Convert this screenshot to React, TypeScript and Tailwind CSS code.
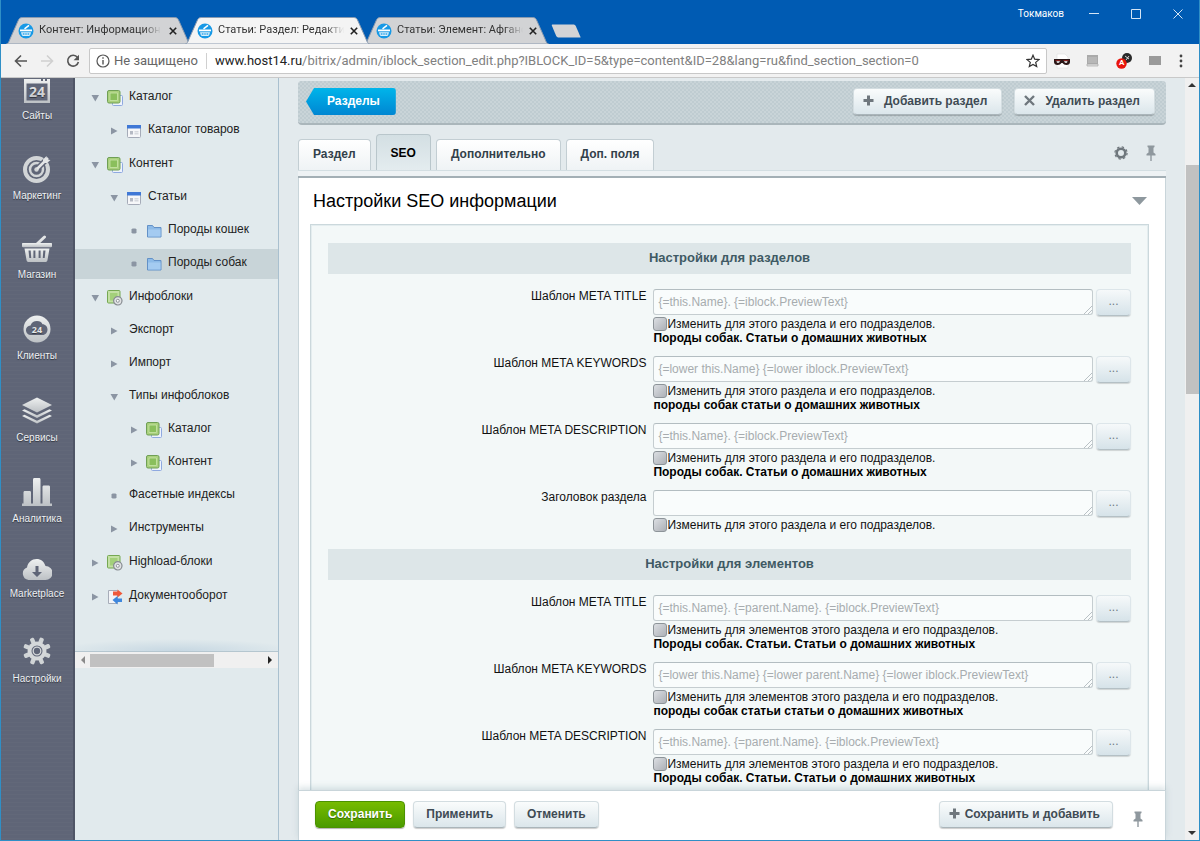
import React from 'react';

type IconProps = { className?: string };

/* ---------- browser chrome ---------- */

function SiteIcon() {
  return (
    <svg className="size-4 shrink-0" viewBox="0 0 16 16" aria-hidden="true">
      <circle cx="8" cy="8" r="7.500" fill="#1799e6" />
      <path d="M2 6.500h12v1.800H2z" fill="#fff" />
      <path d="M3 9.200h10l-.8 2.800c-.2.700-.7 1-1.500 1H5.300c-.8 0-1.300-.3-1.500-1z" fill="#d9effb" />
      <path d="M6.500 5.800L11 2.300" stroke="#fff" strokeWidth="1.500" />
      <path d="M5.300 10v2M7.100 10v2M8.900 10v2M10.700 10v2" stroke="#1799e6" strokeWidth=".8" />
    </svg>
  );
}

function BrowserTab({ title, active = false }: { title: string; active?: boolean }) {
  return (
    <div className={active ? 'relative z-10 -mr-1.5 h-[27px] w-[185px]' : 'relative -mr-1.5 h-[27px] w-[185px]'}>
      <svg className="absolute inset-0 size-full" viewBox="0 0 185 27" preserveAspectRatio="none" aria-hidden="true">
        <path
          d="M0.500 27C2 26.500 3 25 4 22L12 4C13 1.500 14 .5 16.500 .5H168.500C171 .5 172 1.500 173 4L181 22C182 25 183 26.500 184.500 27z"
          fill={active ? '#f4f4f4' : '#d2d3d5'}
          stroke="#8a9bb0"
          strokeWidth="1"
        />
      </svg>
      <div className="relative flex h-full items-center pr-3 pl-3">
        <SiteIcon />
        <a
          href="#"
          className="ml-[5px] w-[126px] [mask-image:linear-gradient(to_right,#000_85%,transparent)] text-[11px] whitespace-nowrap text-[#333]"
        >
          {title}
        </a>
        <button type="button" aria-label="Закрыть вкладку" className="ml-1.5 flex size-3 items-center justify-center">
          <svg className="size-2" viewBox="0 0 8 8" aria-hidden="true">
            <path d="M.8.8l6.400 6.400M7.200.8L.8 7.200" stroke="#222" strokeWidth="1.600" />
          </svg>
        </button>
      </div>
    </div>
  );
}

function TitleBar() {
  return (
    <header className="flex h-[44px] shrink-0 items-end justify-between bg-[#005bb3]">
      <div className="flex items-end pl-[5px]">
        <BrowserTab title="Контент: Информацион" />
        <BrowserTab title="Статьи: Раздел: Редактир" active />
        <BrowserTab title="Статьи: Элемент: Афганс" />
        <button type="button" aria-label="Новая вкладка" className="mb-1.5 ml-2">
          <svg className="h-[14px] w-[30px]" viewBox="0 0 30 14" aria-hidden="true">
            <path d="M2 .5h20c1.500 0 2.300.5 3 2L29.500 13c.2.500 0 .5-.5.5H8c-1.500 0-2.300-.5-3-2L.800 1.500C.6.800 1 .5 2 .5z" fill="#d3d4d6" />
          </svg>
        </button>
      </div>
      <div className="flex self-start pt-1.5 pr-4">
        <span className="mr-[25px] text-[10px] leading-4 text-white">Токмаков</span>
        <div className="flex gap-8 pt-[3px]">
          <button type="button" aria-label="Свернуть" className="self-start">
            <svg className="size-2.5" viewBox="0 0 10 10" aria-hidden="true"><path d="M0 4.500h10" stroke="#d5e5f5" /></svg>
          </button>
          <button type="button" aria-label="Развернуть" className="self-start">
            <svg className="size-2.5" viewBox="0 0 10 10" aria-hidden="true"><path d="M.5.5h9v9h-9z" fill="none" stroke="#d5e5f5" /></svg>
          </button>
          <button type="button" aria-label="Закрыть" className="self-start">
            <svg className="size-2.5" viewBox="0 0 10 10" aria-hidden="true"><path d="M.5.5l9 9M9.500.5l-9 9" stroke="#d5e5f5" /></svg>
          </button>
        </div>
      </div>
    </header>
  );
}

function AddressBar() {
  return (
    <div className="flex h-[34px] shrink-0 items-center border-b border-[#c9c9c9] bg-[#f2f2f2] pr-3 pl-[13px]">
      <div className="flex gap-3">
        <button type="button" aria-label="Назад">
          <svg className="size-3.5" viewBox="0 0 14 14" fill="none" stroke="#555" strokeWidth="1.600" aria-hidden="true"><path d="M13 7H1.500M7 1.500L1.500 7 7 12.500" /></svg>
        </button>
        <button type="button" aria-label="Вперёд">
          <svg className="size-3.5" viewBox="0 0 14 14" fill="none" stroke="#d0d0d0" strokeWidth="1.600" aria-hidden="true"><path d="M1 7h11.500M7 1.500L12.500 7 7 12.500" /></svg>
        </button>
        <button type="button" aria-label="Обновить">
          <svg className="size-3.5" viewBox="0 0 14 14" aria-hidden="true">
            <path d="M11.500 3.500A5.400 5.400 0 1 0 12.400 8" fill="none" stroke="#555" strokeWidth="1.600" />
            <path d="M13 .8v5.400H7.600z" fill="#555" />
          </svg>
        </button>
      </div>
      <div className="ml-[9px] flex h-[26px] min-w-0 flex-1 items-center rounded-xs border border-[#c8c8c8] bg-white px-1.5">
        <svg className="size-3.5 shrink-0" viewBox="0 0 14 14" aria-hidden="true">
          <circle cx="7" cy="7" r="6" fill="none" stroke="#555" strokeWidth="1.200" />
          <path d="M7 6v4.500M7 3.300v1.500" stroke="#555" strokeWidth="1.400" />
        </svg>
        <span className="ml-1 text-[13px] text-[#666]">Не защищено</span>
        <span className="mx-2 h-4 w-px bg-[#d0d0d0]" />
        <span className="min-w-0 flex-1 text-[13px] whitespace-nowrap text-[#808080]">
          <span className="text-[#222]">www.host14.ru</span>
          /bitrix/admin/iblock_section_edit.php?IBLOCK_ID=5&amp;type=content&amp;ID=28&amp;lang=ru&amp;find_section_section=0
        </span>
        <button type="button" aria-label="Добавить в закладки">
          <svg className="size-3.5" viewBox="0 0 14 14" aria-hidden="true">
            <path d="M7 1.200l1.700 4 4.300.4-3.300 2.800 1 4.200L7 10.400l-3.700 2.200 1-4.200L1 5.600l4.300-.4z" fill="none" stroke="#333" strokeWidth="1.200" />
          </svg>
        </button>
      </div>
      <div className="flex items-center gap-4 pl-[7px]">
        <svg className="size-4" viewBox="0 0 16 16" aria-hidden="true">
          <path d="M3 1h8l3 3v11H3z" fill="#fff" stroke="#ddd" strokeWidth=".6" />
          <path d="M0 6h16v3c0 2-1.500 3-3.500 3-2 0-3-1-4-2H7.500c-1 1-2 2-4 2S0 11 0 9z" fill="#2b1717" />
          <path d="M2.500 8.200h3.500l-1 1.500H3zM10 8.200h3.500l-.5 1.500h-2z" fill="#fff" />
          <path d="M1.500 7.500h5M9.500 7.500h5" stroke="#a22" strokeWidth=".7" />
        </svg>
        <svg className="size-3.5" viewBox="0 0 14 14" aria-hidden="true">
          <path d="M1 1h11v9H1z" fill="#aaa" />
          <path d="M2 4h9M2 6h9M2 8h9" stroke="#ccc" strokeWidth=".8" />
          <path d="M1 10h11v2H1z" fill="#ddd" stroke="#aaa" strokeWidth=".7" />
        </svg>
        <span className="relative h-4 w-[17px]">
          <svg className="size-full" viewBox="0 0 17 16" aria-hidden="true">
            <circle cx="11" cy="5" r="5" fill="#2a2a2a" />
            <path d="M9 3l4 3M10 7l3-4" stroke="#fff" strokeWidth=".8" />
            <circle cx="5.500" cy="10.500" r="5.200" fill="#e9150c" />
          </svg>
          <span className="absolute bottom-0.5 left-[3px] text-[8px] leading-[8px] font-bold text-white">A</span>
        </span>
        <svg className="h-2.5 w-3" viewBox="0 0 12 10" aria-hidden="true">
          <path d="M0 0h12v9H0z" fill="#9a9a9a" />
        </svg>
        <button type="button" aria-label="Меню" className="pr-1 pl-0.5">
          <svg className="h-3.5 w-1" viewBox="0 0 4 14" fill="#444" aria-hidden="true">
            <circle cx="2" cy="2" r="1.400" /><circle cx="2" cy="7" r="1.400" /><circle cx="2" cy="12" r="1.400" />
          </svg>
        </button>
      </div>
    </div>
  );
}

/* ---------- dark navigation rail ---------- */

const METAL = 'url(#metal)';

function MetalGradient() {
  return (
    <svg className="absolute size-0" aria-hidden="true">
      <defs>
        <linearGradient id="metal" x1="0" y1="0" x2="0" y2="1">
          <stop offset="0" stopColor="#eef0f0" />
          <stop offset="1" stopColor="#bdc1c5" />
        </linearGradient>
      </defs>
    </svg>
  );
}

const railItems: { label: string; icon: React.ReactNode }[] = [
  {
    label: 'Сайты',
    icon: (
      <svg className="h-6 w-7" viewBox="0 0 28 24" aria-hidden="true">
        <path fillRule="evenodd" d="M1 0h17v2h2V0h2v2h2V0h3v24H1zM3.500 4.500v17h21v-17z" fill={METAL} />
        <text x="14" y="18" textAnchor="middle" fontSize="14" fontWeight="700" fill={METAL} fontFamily="Open Sans, sans-serif">24</text>
      </svg>
    ),
  },
  {
    label: 'Маркетинг',
    icon: (
      <svg className="h-7 w-7" viewBox="0 0 28 28" aria-hidden="true">
        <circle cx="13.500" cy="14.500" r="11.500" fill="none" stroke="#d2d5d7" strokeWidth="4" />
        <circle cx="13.500" cy="14.500" r="6.500" fill="none" stroke="#d2d5d7" strokeWidth="2.500" />
        <circle cx="13.500" cy="14.500" r="2.200" fill="#d2d5d7" />
        <path d="M15 13L26 2" stroke="#5f6577" strokeWidth="5.500" />
        <path d="M14 14L25 3" stroke="#e3e5e6" strokeWidth="2.500" />
        <path d="M20 8V4.500L23.500 1l.5 3.500 3.500.5L24 8z" fill="#e3e5e6" />
      </svg>
    ),
  },
  {
    label: 'Магазин',
    icon: (
      <svg className="h-[27px] w-[30px]" viewBox="0 0 30 27" aria-hidden="true">
        <path d="M15 9L22.500 2" stroke="#e3e5e6" strokeWidth="3" strokeLinecap="round" />
        <path d="M1 8h28c.8 0 1 .5 1 1v2c0 .8-.4 1.200-1 1.200H1c-.6 0-1-.4-1-1.200V9c0-.5.2-1 1-1z" fill={METAL} />
        <path fillRule="evenodd" d="M2.500 13.500h25L25.500 25c-.3 1.500-1 2-2.300 2H6.800C5.500 27 4.800 26.500 4.500 25zM6.500 15.500l.8 7.500h1.900l-.5-7.500zm4.900 0v7.500h2v-7.500zm5.200 0v7.500h2v-7.500zM21.300 15.500l-.5 7.500h1.900l.8-7.500z" fill={METAL} />
      </svg>
    ),
  },
  {
    label: 'Клиенты',
    icon: (
      <svg className="h-[29px] w-7" viewBox="0 0 28 29" aria-hidden="true">
        <circle cx="14" cy="15" r="13.500" fill={METAL} />
        <path d="M8 21a4.800 4.800 0 0 1-.5-9.600C8.500 8.500 11 7 14 7c2.800 0 4.500 1.200 5.500 3.200 2.800 0 5 2.300 5 5.300S22.500 21 19.500 21z" fill="#5f6577" />
        <text x="14" y="18.500" textAnchor="middle" fontSize="9" fontWeight="700" fill="#e3e5e6" fontFamily="Open Sans, sans-serif">24</text>
      </svg>
    ),
  },
  {
    label: 'Сервисы',
    icon: (
      <svg className="h-[30px] w-[30px]" viewBox="0 0 30 30" fill={METAL} aria-hidden="true">
        <path d="M15 2.500l15 7.500-15 7.500L0 10z" />
        <path d="M0 15.500l2.500-1.300 12.500 6 12.500-6 2.500 1.300-15 7.500z" />
        <path d="M0 21l2.500-1.300 12.500 6 12.500-6L30 21l-15 7.500z" />
      </svg>
    ),
  },
  {
    label: 'Аналитика',
    icon: (
      <svg className="h-[29px] w-[30px]" viewBox="0 0 30 29" fill={METAL} aria-hidden="true">
        <path d="M0 29v-2.500h1.500V15.500c0-1 .5-1.500 1.500-1.500h4.500c1 0 1.500.5 1.500 1.500v11h2V3c0-1.500.5-2 1.500-2H17c1 0 1.500.5 1.500 2v23.500h2V10c0-1 .5-1.500 1.500-1.500h4.500c1 0 1.500.5 1.500 1.500v16.500H30V29z" />
      </svg>
    ),
  },
  {
    label: 'Marketplace',
    icon: (
      <svg className="h-[23px] w-[30px]" viewBox="0 0 30 23" aria-hidden="true">
        <path d="M6.500 22a6.500 6.500 0 0 1-1.500-12.500C6 4 10 1 14.500 1 19 1 22 3.500 23.500 8a7 7 0 0 1 0 14z" fill={METAL} />
        <path d="M13.500 8h3v6h3.500l-5 5-5-5h3.500z" fill="#5f6577" />
      </svg>
    ),
  },
  {
    label: 'Настройки',
    icon: (
      <svg className="h-[33px] w-7" viewBox="0 0 28 33" aria-hidden="true">
        <g transform="translate(14 18)">
          {[22, 67, 112, 157].map((a) => (
            <rect key={a} x="-2.200" y="-14" width="4.400" height="28" rx="1.500" fill="#d0d4d6" transform={`rotate(${a})`} />
          ))}
          <circle r="9.500" fill="#d5d8da" />
          <circle r="5.500" fill="#5f6577" />
          <circle r="3.800" fill="none" stroke="#d5d8da" strokeWidth="1.300" />
        </g>
      </svg>
    ),
  },
];

function Rail() {
  return (
    <nav className="w-[74px] shrink-0 overflow-hidden border-r-2 border-[#4f5566] bg-[#5f6577] bg-[repeating-linear-gradient(to_bottom,#626879_0_1px,#5f6577_1px_4px)] pt-px">
      <MetalGradient />
      <ul className="flex flex-col gap-8">
        {railItems.map((item) => (
          <li key={item.label}>
            <a href="#" className="flex flex-col items-center gap-1.5 text-[10px] leading-[14px] whitespace-nowrap text-[#eef1f4] [text-shadow:0_1px_1px_rgba(0,0,0,.5)]">
              {item.icon}
              {item.label}
            </a>
          </li>
        ))}
      </ul>
    </nav>
  );
}

/* ---------- tree menu ---------- */

function TypeIcon() {
  return (
    <svg className="size-4" viewBox="0 0 16 16" aria-hidden="true">
      <rect x="5.500" y="5.500" width="10" height="10" rx="1" fill="#eef3fd" stroke="#8fa9e0" />
      <rect x=".5" y=".5" width="12.500" height="12.500" rx="1.500" fill="#a9d07c" stroke="#6f9f55" />
      <path d="M3 3h7.500v7.500H3z" fill="#8abf5c" stroke="#c9e6a9" strokeWidth=".8" />
    </svg>
  );
}
function ListIcon() {
  return (
    <svg className="size-4" viewBox="0 0 16 16" aria-hidden="true">
      <rect x="1.500" y="2.500" width="13" height="12" rx="1" fill="#f6f7f9" stroke="#a5abb8" />
      <path d="M1 2h14v3.500H1z" fill="#3f78d6" />
      <path d="M4 8h3v3.500H4zM8.500 8.500h4v.8h-4zM8.500 10.500h4v.8h-4z" fill="#b5bac4" />
    </svg>
  );
}
function FolderIcon() {
  return (
    <svg className="size-4" viewBox="0 0 16 16" aria-hidden="true">
      <path d="M1.500 2.500h5l1.500 2h7v9.500h-13.500z" fill="#8dbbe8" stroke="#6391c7" />
      <path d="M2 6.500h12.500v7H2z" fill="#a4cbf1" />
    </svg>
  );
}
function ModuleIcon() {
  return (
    <svg className="size-4" viewBox="0 0 16 16" aria-hidden="true">
      <rect x=".5" y=".5" width="12.500" height="12.500" rx="1" fill="#c3e0a4" stroke="#75a852" />
      <path d="M3 3h7.500v7.500H3z" fill="#a3d07a" />
      <circle cx="10.800" cy="10.800" r="4.200" fill="#e0e2e4" stroke="#868b90" strokeWidth="1.200" />
      <circle cx="10.800" cy="10.800" r="1.500" fill="#fff" stroke="#868b90" strokeWidth=".9" />
    </svg>
  );
}
function WorkflowIcon() {
  return (
    <svg className="size-4" viewBox="0 0 16 16" aria-hidden="true">
      <path d="M1.500 1.500h9v13h-9z" fill="#f4f5f8" stroke="#a7adb9" />
      <path d="M6 2.500h4.500V.5L15.500 4.500l-5 4V6.500H6z" fill="#ef5a3c" />
      <path d="M15 9.500h-4.500V7L5.500 11l5 4.500V13H15z" fill="#3e87dd" />
    </svg>
  );
}

type Node = { text: string; level: 0 | 1 | 2; mark: 'open' | 'closed' | 'dot'; icon?: React.ReactNode; selected?: boolean };

const tree: Node[] = [
  { text: 'Каталог', level: 0, mark: 'open', icon: <TypeIcon /> },
  { text: 'Каталог товаров', level: 1, mark: 'closed', icon: <ListIcon /> },
  { text: 'Контент', level: 0, mark: 'open', icon: <TypeIcon /> },
  { text: 'Статьи', level: 1, mark: 'open', icon: <ListIcon /> },
  { text: 'Породы кошек', level: 2, mark: 'dot', icon: <FolderIcon /> },
  { text: 'Породы собак', level: 2, mark: 'dot', icon: <FolderIcon />, selected: true },
  { text: 'Инфоблоки', level: 0, mark: 'open', icon: <ModuleIcon /> },
  { text: 'Экспорт', level: 1, mark: 'closed' },
  { text: 'Импорт', level: 1, mark: 'closed' },
  { text: 'Типы инфоблоков', level: 1, mark: 'open' },
  { text: 'Каталог', level: 2, mark: 'closed', icon: <TypeIcon /> },
  { text: 'Контент', level: 2, mark: 'closed', icon: <TypeIcon /> },
  { text: 'Фасетные индексы', level: 1, mark: 'dot' },
  { text: 'Инструменты', level: 1, mark: 'closed' },
  { text: 'Highload-блоки', level: 0, mark: 'closed', icon: <ModuleIcon /> },
  { text: 'Документооборот', level: 0, mark: 'closed', icon: <WorkflowIcon /> },
];

const levelPadding = ['mt-px pl-4', 'pl-[35px]', 'pl-[55px]'];
const markPath = { open: 'M.5 1h7.500L4.300 7.500z', closed: 'M1 .5l6.500 3.500L1 7.500z', dot: 'M2.500 1.500h3l1 1v3l-1 1h-3l-1-1v-3z' };

function TreeMenu() {
  return (
    <aside className="flex w-[204px] shrink-0 flex-col border-r border-[#a9c0cf] bg-[#e1eaed]">
      <ul className="flex flex-col gap-[3px] border-b border-[#b5c6cf] bg-[radial-gradient(ellipse_60%_12px_at_50%_100%,#c6d7e2,transparent)] pt-1 pb-[39px]">
        {tree.map((n, i) => (
          <li key={i} className={levelPadding[n.level] + (n.selected ? ' bg-[#c8d4d8]' : '')}>
            <a href="#" className="flex h-[30px] items-center pb-px text-xs whitespace-nowrap text-[#222]">
              <svg className="mr-2 size-2" viewBox="0 0 8 8" fill="#8b95a3" aria-hidden="true"><path d={markPath[n.mark]} /></svg>
              {n.icon}
              <span className={n.icon ? 'ml-1.5 pb-[3px]' : 'ml-[3px] pb-[3px]'}>{n.text}</span>
            </a>
          </li>
        ))}
      </ul>
      <div className="flex h-4 items-center justify-between bg-[#f0f0f0] px-1.5">
        <svg className="h-2 w-1" viewBox="0 0 4 8" aria-hidden="true"><path d="M4 0v8L0 4z" fill="#8a8a8a" /></svg>
        <span className="mr-auto ml-[5px] h-[13px] w-[124px] bg-[#c1c1c1]" />
        <svg className="h-2 w-1" viewBox="0 0 4 8" aria-hidden="true"><path d="M0 0v8l4-4z" fill="#222" /></svg>
      </div>
    </aside>
  );
}

/* ---------- main form ---------- */

const lightButton =
  'flex h-[27px] items-center rounded-[4px] border border-[#d3dde1] border-b-[#aab5ba] bg-linear-to-b from-[#fafcfc] to-[#dbe6eb] pb-0.5 text-xs font-bold text-[#3f4b54] shadow-[0_1px_1px_rgba(0,0,0,.2)]';

function PlusIcon() {
  return (
    <svg className="size-[11px]" viewBox="0 0 11 11" aria-hidden="true"><path d="M4 .5h3V4h3.500v3H7v3.500H4V7H.5V4H4z" fill="#6f777d" /></svg>
  );
}
function CrossIcon() {
  return (
    <svg className="size-[11px]" viewBox="0 0 11 11" aria-hidden="true"><path d="M1 1l9 9M10 1l-9 9" stroke="#6f777d" strokeWidth="2.400" /></svg>
  );
}
function PinIcon({ className }: IconProps) {
  return (
    <svg className={className} viewBox="0 0 10 16" fill="#8f989e" aria-hidden="true">
      <path d="M1.500.5h7v1.500l-1 .8v4.700L9.500 9v1.500H5.700V16H4.300v-5.500H.5V9l2-1.500V2.800l-1-.8z" />
    </svg>
  );
}

function ActionBar() {
  return (
    <div className="flex h-[44px] shrink-0 items-center gap-3 rounded-[4px] border-b-2 border-[#aab6bb] bg-[#c5d0d4] bg-[conic-gradient(#bfccd1_25%,#c9d4d8_0_50%,#bfccd1_0_75%,#c9d4d8_0)] bg-size-[4px_4px] pr-[11px] pl-2 pb-px">
      <button
        type="button"
        className="mr-auto h-[27px] rounded-r-[3px] bg-linear-to-b from-[#00b5ea] to-[#0086d2] pr-4 pb-0.5 pl-[21px] text-xs font-bold text-white [clip-path:polygon(8px_0,100%_0,100%_100%,8px_100%,0_50%)]"
      >
        Разделы
      </button>
      <button type="button" className={lightButton + ' gap-2.5 px-[9px] pr-3.5'}><PlusIcon />Добавить раздел</button>
      <button type="button" className={lightButton + ' gap-2.5 px-[9px] pr-3.5'}><CrossIcon />Удалить раздел</button>
    </div>
  );
}

const formTabs = ['Раздел', 'SEO', 'Дополнительно', 'Доп. поля'];

function FormTabs() {
  return (
    <div className="shrink-0">
      <div className="flex h-[45px] items-end gap-[5px]" role="tablist">
        {formTabs.map((t) => (
          <button
            key={t}
            type="button"
            role="tab"
            aria-selected={t === 'SEO'}
            className={
              t === 'SEO'
                ? 'h-9 rounded-t-[4px] border border-b-0 border-[#b9c6cb] bg-linear-to-b from-[#d3dfe3] to-[#e4ecef] px-3.5 text-xs font-bold text-black'
                : 'h-[31px] rounded-t-[4px] border border-b-0 border-[#c3ced3] bg-linear-to-b from-white to-[#eff3f5] px-3.5 pb-0.5 text-xs font-bold text-[#33414a]'
            }
          >
            {t}
          </button>
        ))}
        <div className="mr-2.5 ml-auto flex items-center gap-[18px] self-center pt-2.5">
          <button type="button" aria-label="Настроить форму">
            <svg className="size-[14px]" viewBox="0 0 14 14" aria-hidden="true">
              <circle cx="7" cy="7" r="4.300" fill="none" stroke="#6f777d" strokeWidth="2.600" />
              <circle cx="7" cy="7" r="6.100" fill="none" stroke="#6f777d" strokeWidth="1.200" strokeDasharray="2.400 2.390" />
            </svg>
          </button>
          <button type="button" aria-label="Закрепить вкладки"><PinIcon className="h-4 w-2.5" /></button>
        </div>
      </div>
      <div className="h-[8px] border-t border-b-2 border-t-[#d3dee2] border-b-[#a3afb5] bg-[#eef2f4]" />
    </div>
  );
}

type Field = { label: string; template: string; result?: string };

const sections: { title: string; toggle: string; fields: Field[] }[] = [
  {
    title: 'Настройки для разделов',
    toggle: 'Изменить для этого раздела и его подразделов.',
    fields: [
      { label: 'Шаблон META TITLE', template: '{=this.Name}. {=iblock.PreviewText}', result: 'Породы собак. Статьи о домашних животных' },
      { label: 'Шаблон META KEYWORDS', template: '{=lower this.Name} {=lower iblock.PreviewText}', result: 'породы собак статьи о домашних животных' },
      { label: 'Шаблон META DESCRIPTION', template: '{=this.Name}. {=iblock.PreviewText}', result: 'Породы собак. Статьи о домашних животных' },
      { label: 'Заголовок раздела', template: '' },
    ],
  },
  {
    title: 'Настройки для элементов',
    toggle: 'Изменить для элементов этого раздела и его подразделов.',
    fields: [
      { label: 'Шаблон META TITLE', template: '{=this.Name}. {=parent.Name}. {=iblock.PreviewText}', result: 'Породы собак. Статьи. Статьи о домашних животных' },
      { label: 'Шаблон META KEYWORDS', template: '{=lower this.Name} {=lower parent.Name} {=lower iblock.PreviewText}', result: 'породы собак статьи статьи о домашних животных' },
      { label: 'Шаблон META DESCRIPTION', template: '{=this.Name}. {=parent.Name}. {=iblock.PreviewText}', result: 'Породы собак. Статьи. Статьи о домашних животных' },
    ],
  },
];

function FieldRow({ field, toggle, id }: { field: Field; toggle: string; id: string }) {
  return (
    <div className="grid grid-cols-[2fr_3fr] gap-x-[7px] pb-[11px]">
      <label htmlFor={id} className="text-right text-xs leading-[14px] text-[#111]">{field.label}</label>
      <div>
        <div className="flex h-7 items-start gap-[3px]">
          <textarea
            id={id}
            rows={1}
            defaultValue={field.template}
            className="h-[26px] min-w-0 flex-1 resize overflow-hidden rounded-[3px] border border-[#c5cdd0] border-t-[#b3bdc1] bg-[#f9fcfc] px-1 py-[5px] text-xs leading-[14px] text-[#a7acaf] [&::-webkit-resizer]:bg-[linear-gradient(135deg,transparent_72%,#b9c1c5_72%,#b9c1c5_76%,transparent_76%,transparent_86%,#b9c1c5_86%,#b9c1c5_90%,transparent_90%)]"
          />
          <button
            type="button"
            aria-label="Вставить переменную"
            className="h-[27px] w-[35px] rounded-[4px] border border-[#dde6ea] border-b-[#b4c0c5] bg-linear-to-b from-[#f6f9fa] to-[#d6e3e9] pb-1 text-xs leading-4 text-[#6f7b85] shadow-[0_1px_1px_rgba(0,0,0,.15)]"
          >
            ...
          </button>
        </div>
        <label className="flex items-center text-xs leading-[14px] text-[#111]">
          <input type="checkbox" className="size-[14px] shrink-0 appearance-none rounded-[3px] border border-[#8d9499] bg-linear-to-br from-[#dcdfe3] to-[#acb0b6]" />
          {toggle}
        </label>
        {field.result && <p className="text-xs leading-[14px] font-bold text-black">{field.result}</p>}
      </div>
    </div>
  );
}

function SeoPanel() {
  return (
    <section className="min-h-0 flex-1 overflow-hidden border-x border-[#c9d5da] bg-white pr-4 pl-[11px]">
      <div className="flex h-[46px] items-center justify-between pr-0.5 pb-px pl-[3px]">
        <h1 className="text-lg text-black">Настройки SEO информации</h1>
        <button type="button" aria-label="Свернуть раздел">
          <svg className="h-2 w-[15px]" viewBox="0 0 15 8" aria-hidden="true"><path d="M0 0h15L7.500 8z" fill="#8e989e" /></svg>
        </button>
      </div>
      <div className="border border-[#cbd8dc] bg-[#f3f8f8] px-[17px] pt-[18px] inset-shadow-[0_0_0_1px_#e4edef]">
        {sections.map((s, si) => (
          <div key={s.title} className="pb-1.5">
            <h2 className="mb-[15px] bg-[#dde6e8] pb-px text-center text-[13px] leading-[30px] font-bold text-[#3f5a64]">{s.title}</h2>
            {s.fields.map((f, fi) => (
              <FieldRow key={f.label} field={f} toggle={s.toggle} id={`field-${si}-${fi}`} />
            ))}
          </div>
        ))}
      </div>
    </section>
  );
}

function FormFooter() {
  return (
    <footer className="relative flex h-[50px] shrink-0 items-start gap-2 border-x border-t border-[#c9d5da] bg-white px-4 pt-2.5 shadow-[0_-3px_6px_rgba(140,165,175,.3)]">
      <button
        type="button"
        className="h-[27px] rounded-[4px] border border-[#4c9200] bg-linear-to-b from-[#77bb00] to-[#4a9b00] px-3 pb-0.5 text-xs font-bold text-white shadow-[0_1px_1px_rgba(0,0,0,.3)] [text-shadow:0_1px_1px_rgba(0,0,0,.4)]"
      >
        Сохранить
      </button>
      <button type="button" className={lightButton + ' px-3'}>Применить</button>
      <button type="button" className={lightButton + ' mr-auto px-3'}>Отменить</button>
      <button type="button" className={lightButton + ' gap-[5px] px-[9px] pr-3'}><PlusIcon />Сохранить и добавить</button>
      <button type="button" aria-label="Закрепить панель" className="mt-2.5 mr-1.5 ml-3"><PinIcon className="h-4 w-2.5" /></button>
    </footer>
  );
}

function PageScrollbar() {
  return (
    <div className="flex w-[14px] shrink-0 flex-col items-center bg-[#f0f0f0] py-[5px]">
      <svg className="h-1 w-2" viewBox="0 0 8 4" aria-hidden="true"><path d="M0 4h8L4 0z" fill="#333" /></svg>
      <div className="flex w-full flex-1 flex-col pt-1 pl-px">
        <span className="basis-[10%]" />
        <span className="basis-[31%] bg-[#c1c1c1]" />
      </div>
      <svg className="h-1 w-2" viewBox="0 0 8 4" aria-hidden="true"><path d="M0 0h8L4 4z" fill="#333" /></svg>
    </div>
  );
}

export default function App() {
  return (
    <div className="flex h-screen flex-col overflow-hidden border border-t-0 border-[#2f8fc6] bg-[#e3eaed] font-['Liberation_Sans',Arial,sans-serif]">
      <div className="shrink-0 font-['Roboto','Noto_Sans',sans-serif]">
        <TitleBar />
        <AddressBar />
      </div>
      <div className="flex min-h-0 flex-1">
        <Rail />
        <TreeMenu />
        <main className="flex min-w-0 flex-1 flex-col pt-[3px] pr-[19px] pl-[19px]">
          <ActionBar />
          <FormTabs />
          <SeoPanel />
          <FormFooter />
        </main>
        <PageScrollbar />
      </div>
    </div>
  );
}
